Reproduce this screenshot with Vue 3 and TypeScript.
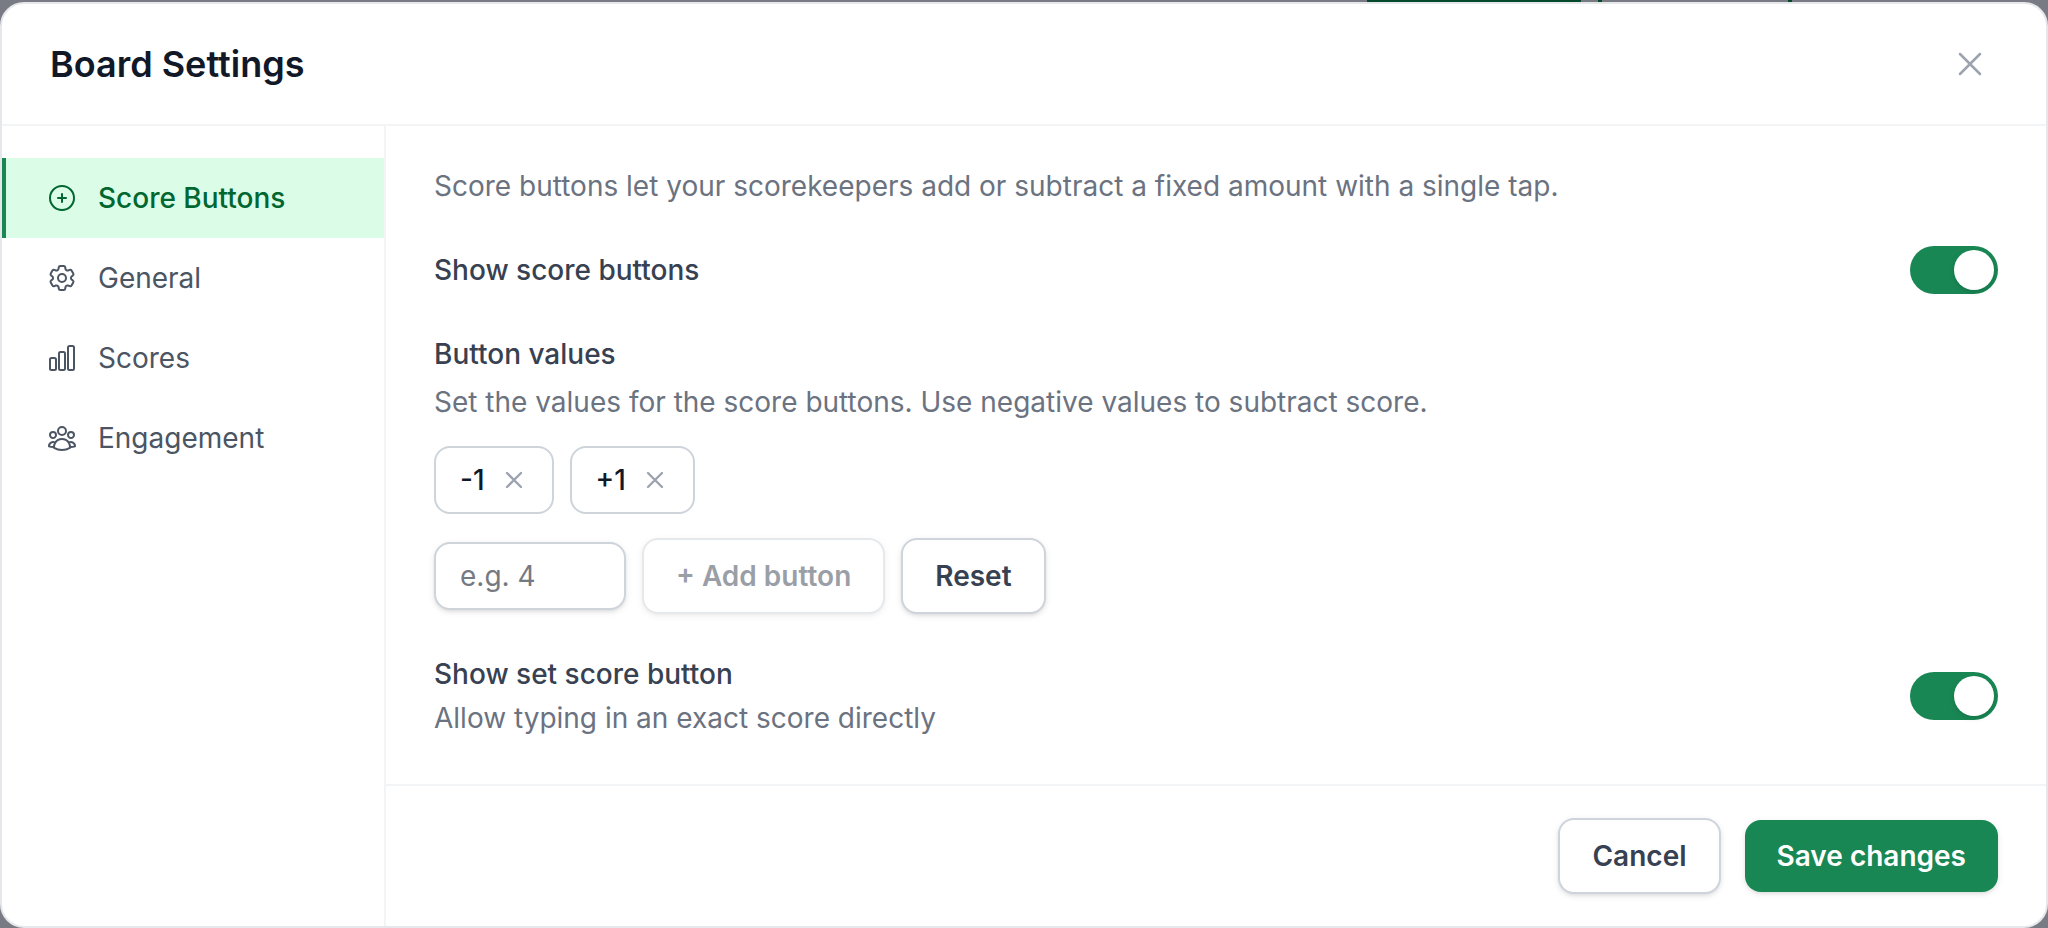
<script setup lang="ts">
import { ref, computed } from 'vue'

interface Section {
  id: string
  label: string
  paths: string[]
}

const sections: Section[] = [
  {
    id: 'buttons',
    label: 'Score Buttons',
    paths: ['M12 9v6m3-3H9m12 0a9 9 0 1 1-18 0 9 9 0 0 1 18 0Z'],
  },
  {
    id: 'general',
    label: 'General',
    paths: [
      'M9.594 3.94c.09-.542.56-.94 1.11-.94h2.593c.55 0 1.02.398 1.11.94l.213 1.281c.063.374.313.686.645.87.074.04.147.083.22.127.325.196.72.257 1.075.124l1.217-.456a1.125 1.125 0 0 1 1.37.49l1.296 2.247a1.125 1.125 0 0 1-.26 1.431l-1.003.827c-.293.241-.438.613-.43.992a7.723 7.723 0 0 1 0 .255c-.008.378.137.75.43.991l1.004.827c.424.35.534.955.26 1.43l-1.298 2.247a1.125 1.125 0 0 1-1.369.491l-1.217-.456c-.355-.133-.75-.072-1.076.124a6.47 6.47 0 0 1-.22.128c-.331.183-.581.495-.644.869l-.213 1.281c-.09.543-.56.94-1.11.94h-2.594c-.55 0-1.019-.398-1.11-.94l-.213-1.281c-.062-.374-.312-.686-.644-.87a6.52 6.52 0 0 1-.22-.127c-.325-.196-.72-.257-1.076-.124l-1.217.456a1.125 1.125 0 0 1-1.369-.49l-1.297-2.247a1.125 1.125 0 0 1 .26-1.431l1.004-.827c.292-.24.437-.613.43-.991a6.932 6.932 0 0 1 0-.255c.007-.38-.138-.751-.43-.992l-1.004-.827a1.125 1.125 0 0 1-.26-1.43l1.297-2.247a1.125 1.125 0 0 1 1.37-.491l1.216.456c.356.133.751.072 1.076-.124.072-.044.146-.086.22-.128.332-.183.582-.495.644-.869l.214-1.28Z',
      'M15 12a3 3 0 1 1-6 0 3 3 0 0 1 6 0Z',
    ],
  },
  {
    id: 'scores',
    label: 'Scores',
    paths: [
      'M3 13.125C3 12.504 3.504 12 4.125 12h2.25c.621 0 1.125.504 1.125 1.125v6.75C7.5 20.496 6.996 21 6.375 21h-2.25A1.125 1.125 0 0 1 3 19.875v-6.75ZM9.75 8.625c0-.621.504-1.125 1.125-1.125h2.25c.621 0 1.125.504 1.125 1.125v11.25c0 .621-.504 1.125-1.125 1.125h-2.25a1.125 1.125 0 0 1-1.125-1.125V8.625ZM16.5 4.125c0-.621.504-1.125 1.125-1.125h2.25C20.496 3 21 3.504 21 4.125v15.75c0 .621-.504 1.125-1.125 1.125h-2.25a1.125 1.125 0 0 1-1.125-1.125V4.125Z',
    ],
  },
  {
    id: 'engagement',
    label: 'Engagement',
    paths: [
      'M18 18.72a9.094 9.094 0 0 0 3.741-.479 3 3 0 0 0-4.682-2.72m.94 3.198.001.031c0 .225-.012.447-.037.666A11.944 11.944 0 0 1 12 21c-2.17 0-4.207-.576-5.963-1.584A6.062 6.062 0 0 1 6 18.719m12 0a5.971 5.971 0 0 0-.941-3.197m0 0A5.995 5.995 0 0 0 12 12.75a5.995 5.995 0 0 0-5.058 2.772m0 0a3 3 0 0 0-4.681 2.72 8.986 8.986 0 0 0 3.74.477m.94-3.197a5.971 5.971 0 0 0-.94 3.197M15 6.75a3 3 0 1 1-6 0 3 3 0 0 1 6 0Zm6 3a2.25 2.25 0 1 1-4.5 0 2.25 2.25 0 0 1 4.5 0Zm-13.5 0a2.25 2.25 0 1 1-4.5 0 2.25 2.25 0 0 1 4.5 0Z',
    ],
  },
]

const active = ref('buttons')
const showButtons = ref(true)
const showSetScore = ref(true)
const values = ref<number[]>([-1, 1])
const draft = ref('')

const canAdd = computed(() => draft.value.trim() !== '' && Number.isFinite(Number(draft.value)))

function format(value: number): string {
  return value > 0 ? `+${value}` : String(value)
}

function add(): void {
  if (!canAdd.value) return
  values.value.push(Number(draft.value))
  draft.value = ''
}

function remove(index: number): void {
  values.value.splice(index, 1)
}

function reset(): void {
  values.value = [-1, 1]
}
</script>

<template>
  <div class="page">
    <div class="backdrop-bar" aria-hidden="true">
      <span class="behind solid"></span>
      <span class="behind outlined"></span>
    </div>
    <div class="dialog" role="dialog" aria-modal="true" aria-labelledby="dialog-title">
      <header class="header">
        <h2 id="dialog-title" class="title">Board Settings</h2>
        <button type="button" class="close" aria-label="Close">
          <svg class="icon-lg" viewBox="0 0 24 24" aria-hidden="true"><path d="M6 18 18 6M6 6l12 12" /></svg>
        </button>
      </header>
      <div class="body">
        <nav class="sidebar" aria-label="Settings sections">
          <button
            v-for="section in sections"
            :key="section.id"
            type="button"
            class="nav-item"
            :class="{ active: section.id === active }"
            @click="active = section.id"
          >
            <svg class="icon" viewBox="0 0 24 24" aria-hidden="true">
              <path v-for="d in section.paths" :key="d" :d="d" />
            </svg>
            <span>{{ section.label }}</span>
          </button>
        </nav>
        <section class="panel">
          <div class="content">
            <p class="hint">Score buttons let your scorekeepers add or subtract a fixed amount with a single tap.</p>
            <div class="row">
              <label class="label" for="show-buttons">Show score buttons</label>
              <input id="show-buttons" v-model="showButtons" type="checkbox" role="switch" class="switch" />
            </div>
            <div class="group">
              <div class="texts wide">
                <label class="label" for="new-value">Button values</label>
                <p class="hint">Set the values for the score buttons. Use negative values to subtract score.</p>
              </div>
              <ul class="chips">
                <li v-for="(value, index) in values" :key="index" class="chip">
                  <span>{{ format(value) }}</span>
                  <button type="button" class="remove" :aria-label="`Remove ${format(value)}`" @click="remove(index)">
                    <svg class="icon-sm" viewBox="0 0 24 24" aria-hidden="true"><path d="M6 18 18 6M6 6l12 12" /></svg>
                  </button>
                </li>
              </ul>
              <div class="adder">
                <input id="new-value" v-model="draft" type="text" class="field" placeholder="e.g. 4" />
                <button type="button" class="btn" :disabled="!canAdd" @click="add">+ Add button</button>
                <button type="button" class="btn" @click="reset">Reset</button>
              </div>
            </div>
            <div class="row">
              <div class="texts">
                <label class="label" for="show-set">Show set score button</label>
                <p class="hint">Allow typing in an exact score directly</p>
              </div>
              <input id="show-set" v-model="showSetScore" type="checkbox" role="switch" class="switch" />
            </div>
          </div>
          <footer class="footer">
            <button type="button" class="btn">Cancel</button>
            <button type="button" class="btn primary">Save changes</button>
          </footer>
        </section>
      </div>
    </div>
  </div>
</template>

<style>
body {
  margin: 0;
  background: #787b83;
}
</style>

<style scoped>
.page {
  position: relative;
  box-sizing: border-box;
  display: flex;
  min-height: 100vh;
  padding-top: 2px;
  background: #787b83;
  font-family: Inter, "Liberation Sans", sans-serif;
  font-optical-sizing: none;
  font-size: 28px;
  line-height: 40px;
  color: #374151;
}

.page *,
.page *::before {
  box-sizing: border-box;
}

.backdrop-bar {
  position: absolute;
  top: 0;
  right: 256px;
  display: flex;
  gap: 17px;
  height: 4px;
}

.behind {
  width: 214px;
}

.solid {
  background: #034a2c;
}

.outlined {
  width: 194px;
  border: 4px solid #034a2c;
  border-width: 0 4px;
}

.dialog {
  position: relative;
  flex: 1;
  display: flex;
  flex-direction: column;
  min-width: 0;
  overflow: hidden;
  border: 2px solid #e5e7eb;
  border-radius: 24px;
  background: #fff;
}

.header {
  display: flex;
  align-items: center;
  justify-content: space-between;
  padding: 32px 48px;
  border-bottom: 2px solid #f3f4f6;
}

.title {
  margin: 0;
  font-size: 36px;
  line-height: 56px;
  font-weight: 600;
  color: #111827;
}

button,
input {
  font: inherit;
}

button {
  cursor: pointer;
}

svg {
  display: block;
  flex: none;
  fill: none;
  stroke: currentColor;
  stroke-width: 1.5;
  stroke-linecap: round;
  stroke-linejoin: round;
}

.icon {
  width: 32px;
  height: 32px;
}

.icon-lg {
  width: 40px;
  height: 40px;
}

.icon-sm {
  width: 28px;
  height: 28px;
  stroke-width: 2;
}

.close {
  padding: 8px;
  border: 0;
  background: none;
  color: #9ca3af;
}

.body {
  flex: 1;
  display: flex;
}

.sidebar {
  flex: none;
  width: 384px;
  padding: 32px 0;
  border-right: 2px solid #f3f4f6;
}

.nav-item {
  display: flex;
  align-items: center;
  gap: 20px;
  width: 100%;
  padding: 20px 40px;
  border: 0;
  border-left: 4px solid transparent;
  background: none;
  color: #4b5563;
  text-align: left;
}

.nav-item.active {
  border-left-color: #198754;
  background: #dbfce7;
  color: #016630;
  font-weight: 500;
}

.panel {
  flex: 1;
  display: flex;
  flex-direction: column;
  min-width: 0;
}

.content {
  flex: 1;
  display: flex;
  flex-direction: column;
  gap: 40px;
  padding: 40px 48px;
}

.hint {
  margin: 0;
  color: #6b7280;
}

.label {
  font-weight: 500;
}

.row {
  display: flex;
  align-items: center;
  justify-content: space-between;
  gap: 32px;
}

.group {
  display: flex;
  flex-direction: column;
  gap: 24px;
}

.texts {
  display: flex;
  flex-direction: column;
  gap: 4px;
}

.texts.wide {
  gap: 8px;
}

.switch {
  appearance: none;
  flex: none;
  display: flex;
  width: 88px;
  height: 48px;
  margin: 0;
  padding: 4px;
  border-radius: 24px;
  background: #ced4da;
  cursor: pointer;
}

.switch::before {
  content: "";
  width: 40px;
  height: 40px;
  border-radius: 20px;
  background: #fff;
  box-shadow: 0 2px 6px rgb(0 0 0 / 0.1), 0 2px 4px -2px rgb(0 0 0 / 0.1);
}

.switch:checked {
  justify-content: flex-end;
  background: #198754;
}

.chips {
  display: flex;
  flex-wrap: wrap;
  gap: 16px;
  margin: 0;
  padding: 0;
  list-style: none;
}

.chip {
  display: flex;
  align-items: center;
  gap: 15px;
  padding: 12px 24px;
  border: 2px solid #ced4da;
  border-radius: 16px;
  color: #111827;
  font-weight: 500;
}

.remove {
  padding: 0;
  border: 0;
  background: none;
  color: #9ca3af;
}

.adder {
  display: flex;
  flex-wrap: wrap;
  align-items: center;
  gap: 16px;
}

.field {
  width: 192px;
  height: 68px;
  padding: 12px 24px;
  border: 2px solid #ced4da;
  border-radius: 16px;
  background: #fff;
  color: #111827;
  box-shadow: 0 2px 6px rgb(0 0 0 / 0.1), 0 2px 4px -2px rgb(0 0 0 / 0.1);
}

.field::placeholder {
  color: #757a82;
  opacity: 1;
}

.btn {
  padding: 16px 32px;
  border: 2px solid #ced4da;
  border-radius: 16px;
  background: #fff;
  color: #374151;
  font-weight: 600;
  box-shadow: 0 2px 6px rgb(0 0 0 / 0.1), 0 2px 4px -2px rgb(0 0 0 / 0.1);
}

.btn:disabled {
  opacity: 0.5;
  cursor: default;
}

.btn.primary {
  border: 0;
  background: #198754;
  color: #fff;
}

.footer {
  display: flex;
  align-items: center;
  justify-content: flex-end;
  gap: 24px;
  padding: 32px 48px;
  border-top: 2px solid #f3f4f6;
}
</style>
